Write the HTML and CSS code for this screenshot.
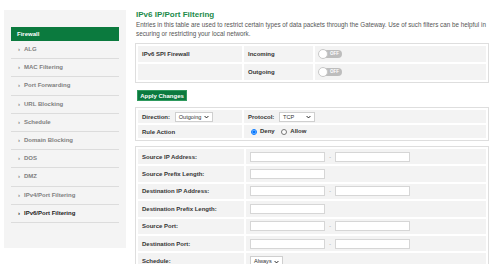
FILE: index.html
```html
<!DOCTYPE html>
<html lang="en">
<head>
    <meta charset="UTF-8">
    <meta name="viewport" content="width=device-width, initial-scale=1.0">
    <title>IPv6 IP/Port Filtering</title>
    <link rel="stylesheet" href="styles.css">
</head>
<body>
    <div class="page">
        <div class="sidebar">
            <div class="side-head">Firewall</div>
            <ul class="side-menu">
                <li><span class="chev">&rsaquo;</span>ALG</li>
                <li><span class="chev">&rsaquo;</span>MAC Filtering</li>
                <li><span class="chev">&rsaquo;</span>Port Forwarding</li>
                <li><span class="chev">&rsaquo;</span>URL Blocking</li>
                <li><span class="chev">&rsaquo;</span>Schedule</li>
                <li><span class="chev">&rsaquo;</span>Domain Blocking</li>
                <li><span class="chev">&rsaquo;</span>DOS</li>
                <li><span class="chev">&rsaquo;</span>DMZ</li>
                <li><span class="chev">&rsaquo;</span>IPv4/Port Filtering</li>
                <li class="active"><span class="chev">&rsaquo;</span>IPv6/Port Filtering</li>
            </ul>
        </div>

        <div class="main">
            <h2 class="title">IPv6 IP/Port Filtering</h2>
            <p class="desc">Entries in this table are used to restrict certain types of data packets through the Gateway. Use of such filters can be helpful in securing or restricting your local network.</p>

            <table class="box spi">
                <tr>
                    <td class="c1">IPv6 SPI Firewall</td>
                    <td class="c2">Incoming</td>
                    <td><span class="toggle">OFF</span></td>
                </tr>
                <tr>
                    <td class="c1"></td>
                    <td class="c2">Outgoing</td>
                    <td><span class="toggle">OFF</span></td>
                </tr>
            </table>

            <button class="btn">Apply Changes</button>

            <table class="box rule">
                <tr>
                    <td class="c1">Direction:
                        <span class="sel sel-dir">Outgoing<svg viewBox="0 0 8 6"><path d="M1 1.5 4 4.5 7 1.5" fill="none" stroke="#222" stroke-width="1.6"/></svg></span>
                    </td>
                    <td>Protocol:
                        <span class="sel sel-proto">TCP<svg viewBox="0 0 8 6"><path d="M1 1.5 4 4.5 7 1.5" fill="none" stroke="#222" stroke-width="1.6"/></svg></span>
                    </td>
                </tr>
                <tr>
                    <td class="c1">Rule Action</td>
                    <td>
                        <label class="radio"><input type="radio" name="act" checked>Deny</label>
                        <label class="radio"><input type="radio" name="act">Allow</label>
                    </td>
                </tr>
            </table>

            <table class="box fields">
                <tr>
                    <td class="c1">Source IP Address:</td>
                    <td><input class="field" type="text"><span class="dash">-</span><input class="field" type="text"></td>
                </tr>
                <tr>
                    <td class="c1">Source Prefix Length:</td>
                    <td><input class="field" type="text"></td>
                </tr>
                <tr>
                    <td class="c1">Destination IP Address:</td>
                    <td><input class="field" type="text"><span class="dash">-</span><input class="field" type="text"></td>
                </tr>
                <tr>
                    <td class="c1">Destination Prefix Length:</td>
                    <td><input class="field" type="text"></td>
                </tr>
                <tr>
                    <td class="c1">Source Port:</td>
                    <td><input class="field" type="text"><span class="dash">-</span><input class="field" type="text"></td>
                </tr>
                <tr>
                    <td class="c1">Destination Port:</td>
                    <td><input class="field" type="text"><span class="dash">-</span><input class="field" type="text"></td>
                </tr>
                <tr>
                    <td class="c1">Schedule:</td>
                    <td><span class="sel sel-sched">Always<svg viewBox="0 0 8 6"><path d="M1 1.5 4 4.5 7 1.5" fill="none" stroke="#222" stroke-width="1.6"/></svg></span></td>
                </tr>
            </table>
        </div>
    </div>
</body>
</html>
```

FILE: styles.css
```css
body{
    margin: 0;
    background-color: #fff;
    font-family: "Liberation Sans", Arial, sans-serif;
    color: #333;
}

.page{
    display: flex;
    align-items: flex-start;
}

/* left menu */
.sidebar{
    background-color: #f4f4f4;
    width: 108px;
    margin: 10px 0 0 4px;
    padding: 17px 7px 25px 7px;
}
.side-head{
    background-color: #0b7a3e;
    color: #fff;
    font-size: 6px;
    font-weight: bold;
    height: 14px;
    line-height: 14px;
    padding-left: 6px;
}
.side-menu{
    list-style: none;
    margin: 0;
    padding: 0;
}
.side-menu li{
    height: 17.2px;
    line-height: 17.2px;
    border-bottom: 1px solid #dcdcdc;
    font-size: 6px;
    font-weight: bold;
    color: #808080;
    padding-left: 7px;
}
.side-menu li.active{
    color: #222;
}
.chev{
    display: inline-block;
    width: 6px;
    font-size: 6px;
}

/* content */
.main{
    margin-left: 9px;
    width: 354px;
}
.title{
    margin: 10px 0 0 1px;
    font-size: 8px;
    line-height: 10px;
    color: #1c8a4a;
}
.desc{
    margin: 0 0 0 1px;
    font-size: 6.3px;
    line-height: 9px;
    color: #555;
}

.box{
    width: 100%;
    border: 1px solid #dedede;
    border-spacing: 2px;
    font-size: 6px;
    font-weight: bold;
    color: #333;
}
.box td{
    background-color: #f3f3f3;
    padding: 0 4px;
}
.spi{
    margin-top: 5px;
}
.spi td{
    height: 16px;
}
.spi .c1{
    width: 96px;
}
.spi .c2{
    width: 61px;
}
.toggle{
    position: relative;
    display: inline-block;
    width: 23px;
    height: 8px;
    line-height: 8px;
    border-radius: 5px;
    background-color: #bdbdbd;
    color: #fff;
    font-size: 4.5px;
    text-align: right;
    padding-right: 3px;
    box-sizing: border-box;
    vertical-align: middle;
}
.toggle::before{
    content: "";
    position: absolute;
    left: -1px;
    top: -1px;
    width: 8px;
    height: 8px;
    border-radius: 50%;
    background-color: #fff;
    border: 1px solid #c8c8c8;
}

.btn{
    display: block;
    margin: 7px 0 0 2px;
    height: 11px;
    width: 50px;
    padding: 0;
    background-color: #0b7a3e;
    border: 1px solid #2f9a5e;
    color: #fff;
    font-family: "Liberation Sans", Arial, sans-serif;
    font-size: 6px;
    font-weight: bold;
}

.rule{
    margin-top: 6px;
}
.rule td{
    height: 13px;
}
.rule .c1{
    width: 96px;
}
.sel{
    position: relative;
    display: inline-block;
    box-sizing: border-box;
    height: 10px;
    line-height: 8px;
    border: 1px solid #cfcfcf;
    background-color: #fff;
    font-weight: normal;
    font-size: 5.6px;
    color: #333;
    padding-left: 3px;
    vertical-align: middle;
    margin-left: 3px;
}
.sel svg{
    position: absolute;
    right: 3px;
    top: 2.5px;
    width: 5px;
    height: 4px;
}
.sel-dir{
    width: 38px;
}
.sel-proto{
    width: 36px;
}
.sel-sched{
    width: 33px;
    margin-left: 0;
}
.radio{
    margin-right: 2px;
}
.radio input{
    width: 6px;
    height: 6px;
    margin: 0 3px 0 3px;
    vertical-align: middle;
}

.fields{
    margin-top: 5px;
}
.fields td{
    height: 15.4px;
}
.fields .c1{
    width: 98px;
}
.field{
    box-sizing: border-box;
    width: 75px;
    height: 10px;
    border: 1px solid #d6d6d6;
    padding: 0;
    vertical-align: middle;
}
.dash{
    display: inline-block;
    width: 10px;
    text-align: center;
    color: #999;
    font-weight: normal;
    font-size: 5px;
    vertical-align: middle;
}
```
